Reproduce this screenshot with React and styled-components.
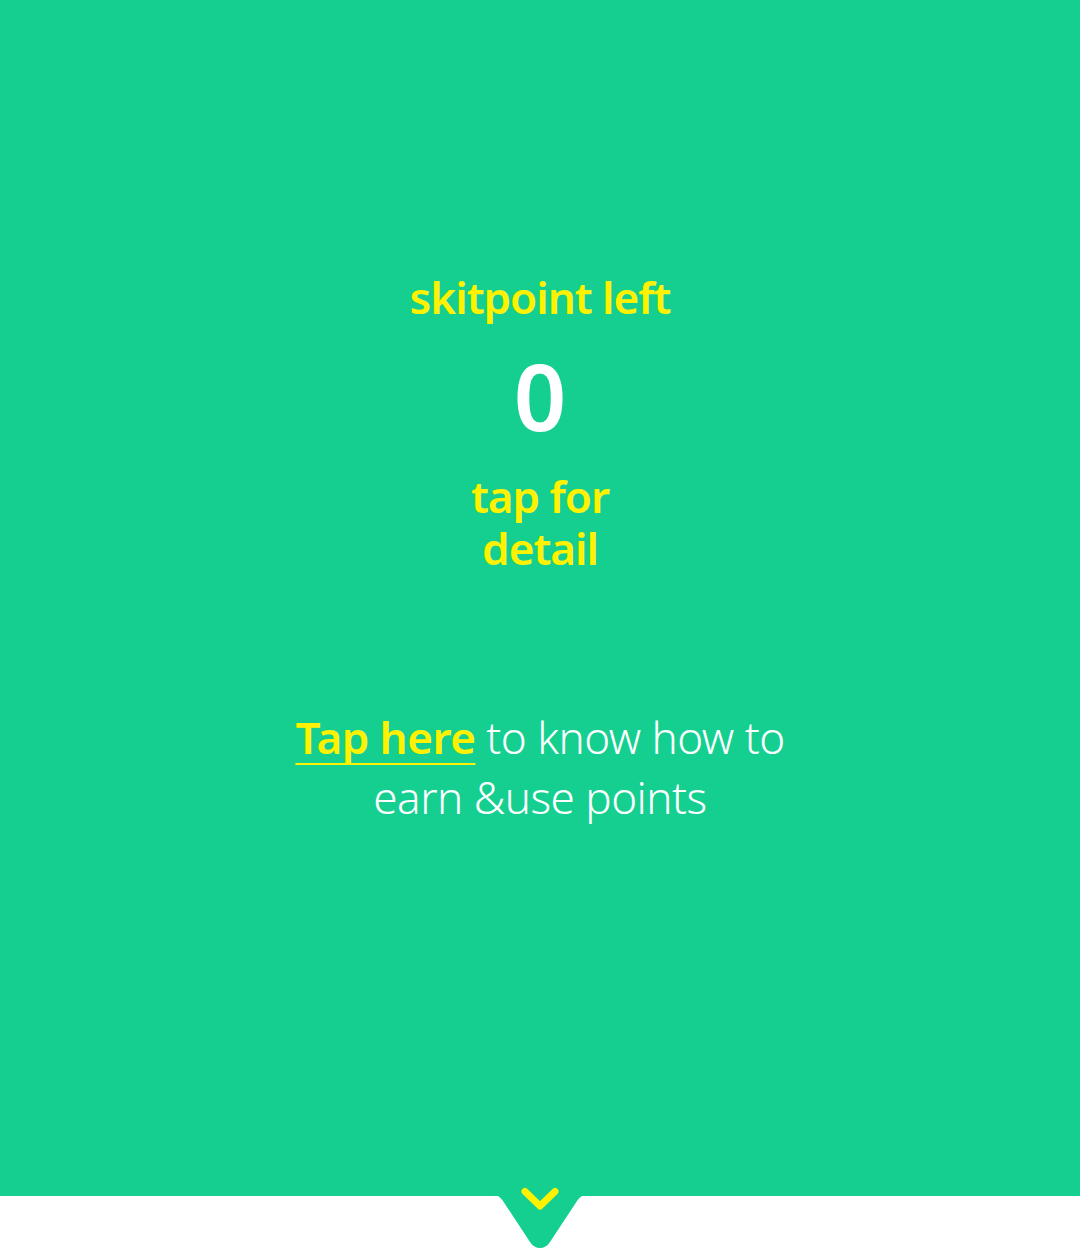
import React from 'react';
import styled, { createGlobalStyle } from 'styled-components';

const GREEN = '#14cf8f';
const YELLOW = '#fff200';

const Global = createGlobalStyle`
  html, body {
    margin: 0;
    padding: 0;
    background: #fff;
  }
  body {
    font-family: "Noto Sans", "Open Sans", sans-serif;
  }
`;

const Page = styled.div`
  width: 1080px;
  height: 1249px;
  display: flex;
  flex-direction: column;
  background: #fff;
  overflow: hidden;
`;

const Panel = styled.section`
  height: 1196px;
  background: ${GREEN};
  display: flex;
  flex-direction: column;
  align-items: center;
  padding-top: 271px;
  box-sizing: border-box;
`;

const Label = styled.div`
  color: ${YELLOW};
  font-weight: 600;
  font-size: ${({ size }) => size || 44}px;
  line-height: 52px;
  letter-spacing: -1px;
  text-align: center;
  width: ${({ w }) => w || 'auto'};
`;

const Points = styled.div`
  color: #fff;
  font-size: 92px;
  font-weight: 600;
  line-height: 100px;
  margin: 23px 0 24px;
`;

const Info = styled.p`
  margin: 133px 0 0;
  width: 520px;
  text-align: center;
  color: #fff;
  font-size: 44px;
  font-weight: 300;
  line-height: 60px;
  letter-spacing: -0.5px;
`;

const TapLink = styled.a`
  color: ${YELLOW};
  font-weight: 600;
  text-decoration: underline;
  text-decoration-thickness: 1.5px;
  text-decoration-skip-ink: none;
  text-underline-offset: 9px;
  cursor: pointer;
`;

const Footer = styled.div`
  position: relative;
  flex: 1;
  display: flex;
  justify-content: center;
`;

const Tab = styled.svg`
  position: absolute;
  top: -16px;
  width: 120px;
  height: 70px;
`;

const ArrowTab = () => (
  <Tab viewBox="0 0 120 70">
    <rect x="0" y="0" width="120" height="16" fill={GREEN} />
    <path
      d="M8 15 H12 C18 15 20 17 23 21 L50 62 C55 70 65 70 70 62 L97 21 C100 17 102 15 108 15 H112 V16 H8 Z"
      fill={GREEN}
    />
    <path
      d="M45 11.5 L60 26 L75 11.5"
      fill="none"
      stroke={YELLOW}
      strokeWidth="7"
      strokeLinecap="round"
      strokeLinejoin="round"
    />
  </Tab>
);

export default function App() {
  return (
    <Page>
      <Global />
      <Panel>
        <Label>skitpoint left</Label>
        <Points>0</Points>
        <Label w="180px">tap for detail</Label>
        <Info>
          <TapLink>Tap here</TapLink> to know how to earn &amp;use points
        </Info>
      </Panel>
      <Footer>
        <ArrowTab />
      </Footer>
    </Page>
  );
}
